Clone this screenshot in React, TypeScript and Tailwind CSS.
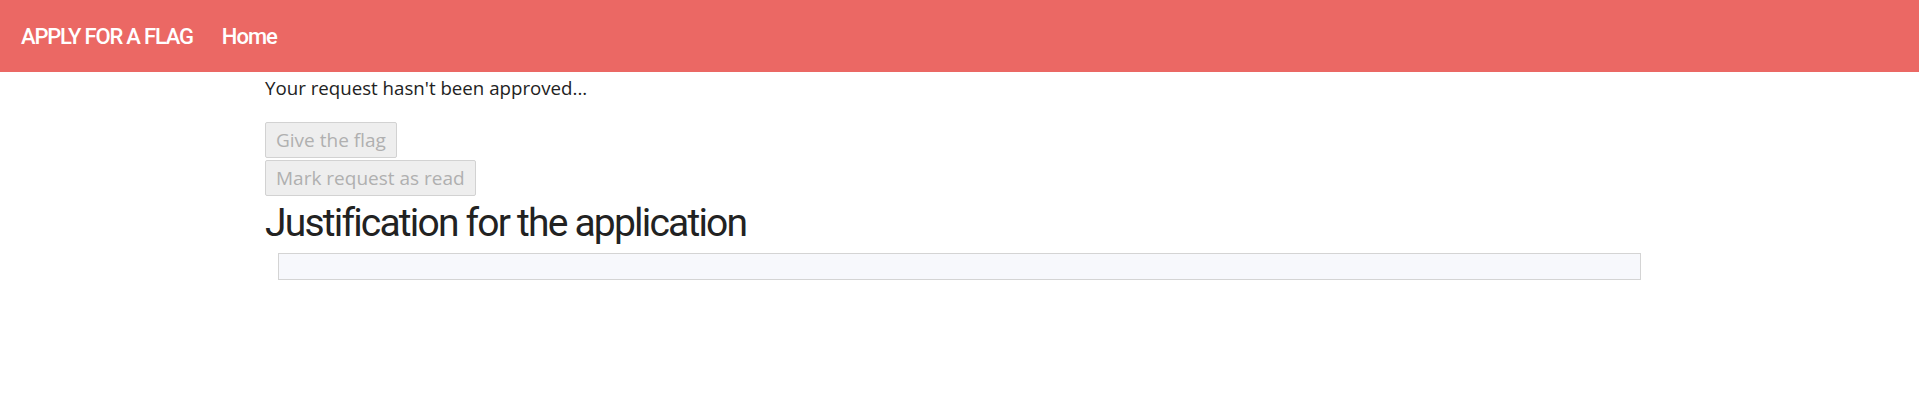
import React from 'react';

const headingFont = { fontFamily: 'Roboto, "Liberation Sans", sans-serif' };

const NavBar = () => {
  return (
    <div className="flex h-[72px] w-full items-center bg-[#eb6864] px-[21px] text-white" style={headingFont}>
      <div className="text-[22px] font-medium tracking-[-1.2px]">APPLY FOR A FLAG</div>
      <div className="ml-[29px] text-[22px] font-medium tracking-[-1px]">Home</div>
    </div>
  );
};

const btnClass =
  'h-[36px] rounded-[2px] border border-[#d2d2d2] bg-[#eeeeee] px-[10px] text-[19px] leading-[34px] text-[#b0b0b0]';

const App = () => {
  return (
    <div className="min-h-[418px] w-full bg-white font-['Open_Sans',sans-serif] text-[#222222]">
      <NavBar />
      <div className="mx-auto w-[1389px]">
        <p className="mt-[2px] text-[18.7px] leading-[27px]">Your request hasn't been approved...</p>
        <div className="mt-[21px] flex flex-col items-start gap-[2px]">
          <button disabled className={btnClass}>
            Give the flag
          </button>
          <button disabled className={btnClass}>
            Mark request as read
          </button>
        </div>
        <h1 className="mt-[3px] text-[39px] leading-[49px] tracking-[-1.8px] text-[#222222]" style={headingFont}>
          Justification for the application
        </h1>
        <div className="mx-[13px] mt-[5px] h-[27px] border border-[#d4d4d4] bg-[#f7f8fc]"></div>
      </div>
    </div>
  );
};

export default App;
